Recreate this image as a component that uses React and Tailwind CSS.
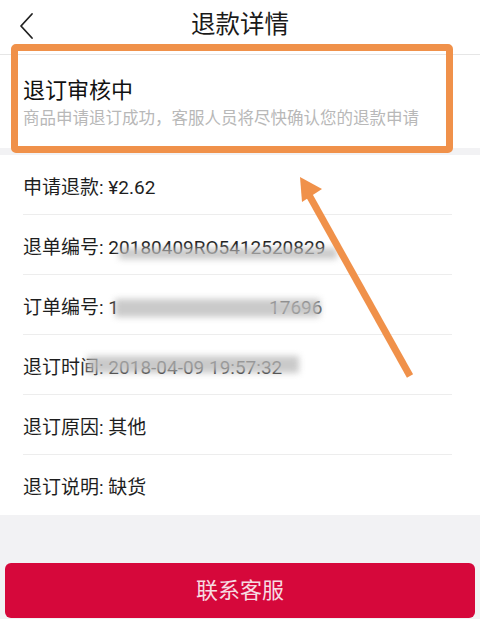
import React from "react";

const rows = [
  { label: "申请退款", value: "¥2.62" },
  { label: "退单编号", value: "20180409RO5412520829", blur: "left-[96px] top-[14px] w-[218px] h-[11px]" },
  { label: "订单编号", value: "1", gap: true, tail: "17696", blur: "left-[92px] top-[5px] w-[205px] h-[18px]" },
  { label: "退订时间", value: "2018-04-09 19:57:32", blur: "left-[64px] top-[2px] w-[212px] h-[17px]" },
  { label: "退订原因", value: "其他" },
  { label: "退订说明", value: "缺货" },
];

const App = () => {
  return (
    <div
      className="relative w-[480px] h-[619px] overflow-hidden bg-[#f2f2f4] flex flex-col"
      style={{ fontFamily: 'Roboto, "Noto Sans CJK SC", "Noto Sans", sans-serif' }}
    >
      {/* header */}
      <div className="h-[55px] bg-white border-b border-[#e6e6e6] flex items-center justify-center relative shrink-0">
        <svg className="absolute left-[18px] top-[12px] w-[18px] h-[28px]" viewBox="0 0 18 28" fill="none">
          <path d="M14 2L3 14l11 12" stroke="#222" strokeWidth="1.8" strokeLinecap="round" strokeLinejoin="round" />
        </svg>
        <h1 className="text-[24.5px] text-[#1a1a1a] leading-none -mt-[4px]">退款详情</h1>
      </div>

      {/* status */}
      <div className="bg-white h-[93px] shrink-0 pl-[23px] pt-[21px]">
        <div className="text-[22px] text-[#111] leading-[30px]">退订审核中</div>
        <div className="text-[16.5px] text-[#b8b8b8] leading-[24px] mt-[1px]">
          商品申请退订成功，客服人员将尽快确认您的退款申请
        </div>
      </div>

      {/* details */}
      <div className="bg-white mt-[7px] shrink-0">
        {rows.map((r) => (
          <div key={r.label} className="ml-[23px] mr-[28px] h-[60px] pt-[7px] flex items-center border-b border-[#ededed] last:border-b-0 text-[19px] text-[#1e1e1e]">
            <span className="relative whitespace-nowrap">
              {r.label}: {r.value}
              {r.gap && <span className="inline-block w-[150px]" />}
              {r.tail && <span className="text-[#444]">{r.tail}</span>}
              {r.blur && (
                <span className={`absolute ${r.blur} bg-[#bdbdbd] blur-[3px] opacity-80`} />
              )}
            </span>
          </div>
        ))}
      </div>

      <div className="flex-1" />

      <button className="mx-[5px] mb-[1px] h-[55px] rounded-[6px] bg-[#d6083b] text-[#f7dbe2] text-[22px] shrink-0">
        联系客服
      </button>

      {/* annotation overlay */}
      <div className="absolute left-[11px] top-[44px] w-[442px] h-[109px] border-[7px] border-[#f0914a] rounded-[5px]" />
      <svg className="absolute left-0 top-0 w-[480px] h-[619px] pointer-events-none" viewBox="0 0 480 619">
        <line x1="410" y1="376" x2="309" y2="195" stroke="#f0914a" strokeWidth="7" strokeLinecap="butt" />
        <polygon points="300,177 322,189 302,202" fill="#f0914a" />
      </svg>
    </div>
  );
};

export default App;
